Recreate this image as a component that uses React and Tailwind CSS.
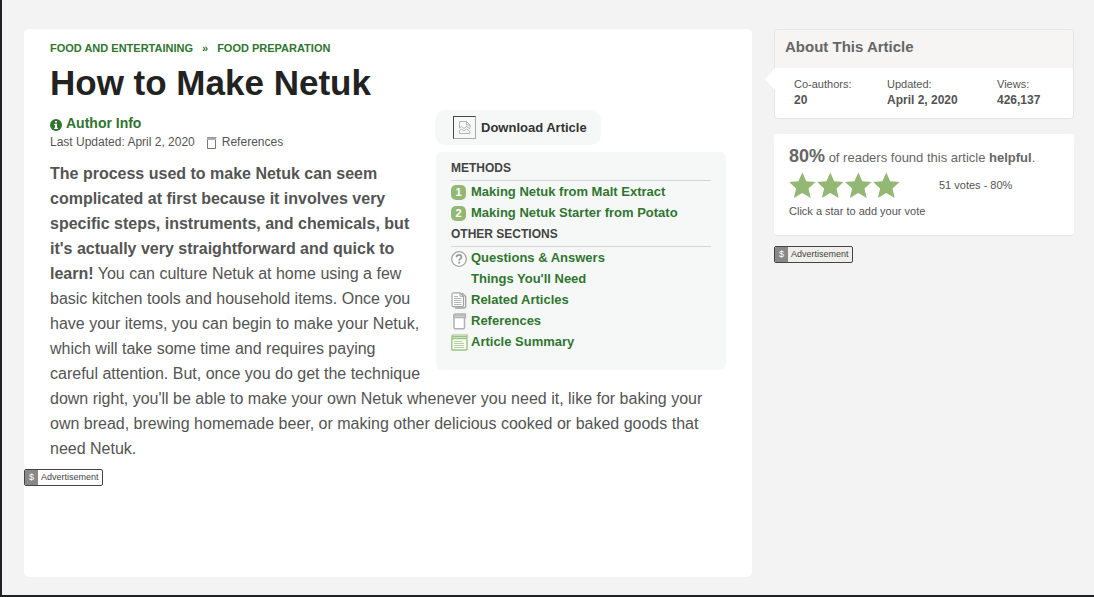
import React from "react";

function PageIcon({ className }) {
  return (
    <svg viewBox="0 0 12 14" className={className} fill="none" aria-hidden="true">
      <path d="M1.500 4v8.500h8V4" fill="#fff" stroke="#777" />
      <path d="M1 1h9v3H1z" fill="#aaa" />
      <path d="M1 1.500h9.500" stroke="#999" />
    </svg>
  );
}

function QuestionIcon() {
  return (
    <svg viewBox="0 0 16 16" className="size-4" fill="none" aria-hidden="true">
      <circle cx="8" cy="8" r="7.3" fill="#fff" stroke="#a3a3a3" strokeWidth="1.3" />
      <path d="M5.600 6.300c0-1.600 1-2.400 2.500-2.400s2.400.9 2.400 2.100c0 1.700-2.300 1.800-2.300 3.600" stroke="#999" strokeWidth="1.900" />
      <path d="M8.200 10.600v2" stroke="#999" strokeWidth="2" />
    </svg>
  );
}

function ArticlesIcon() {
  return (
    <svg viewBox="0 0 16 17" className="h-[17px] w-4" fill="none" stroke="#a3a3a3" aria-hidden="true">
      <path d="M11 1l3.700 3.500v9.500q0 2-2 2H4" strokeWidth="1.300" />
      <path d="M2.500.8H9l3.500 3.400v9q0 1.500-1.500 1.500H2.500Q1 14.700 1 13.200v-11Q1 .8 2.500.8z" fill="#fff" strokeWidth="1.200" />
      <path d="M9 1v3.300h3" />
      <path d="M3 4.500h4M3 6.500h7.500M3 8.500h7.500M3 10.500h7.500M3 12.500h7.500" stroke="#b5b5b5" />
    </svg>
  );
}

function ReferencesIcon() {
  return (
    <svg viewBox="0 0 16 17" className="h-[17px] w-4" fill="none" stroke="#b0b0b0" aria-hidden="true">
      <rect x="3" y="4" width="10.500" height="11.800" rx="1" fill="#fff" strokeWidth="1.500" />
      <path d="M2.700 5V2.500q0-1.500 1.500-1.500H14.500v3.500H3" fill="#e2e2e2" strokeWidth="1.300" />
      <path d="M3 2.700h11" />
    </svg>
  );
}

function SummaryIcon() {
  return (
    <svg viewBox="0 0 17 17" className="h-[17px] w-[17px] shrink-0" fill="none" stroke="#9cc283" aria-hidden="true">
      <rect x=".8" y="4.500" width="15.200" height="11.500" rx="1" fill="#f8fbf5" strokeWidth="1.400" />
      <path d="M.8 4.500V2.500q0-1.500 1.500-1.500H16v3.500M1 2.700h15" strokeWidth="1.200" />
      <path d="M3 7.500h8M3 9.500h10M3 11.500h10M3 13.500h10" stroke="#b3d29f" />
    </svg>
  );
}

function BrokenImage() {
  return (
    <span className="flex size-[23px] items-center justify-center border border-t-[#444] border-r-[#a9a9a9] border-b-[#a9a9a9] border-l-[#444]">
      <svg viewBox="0 0 14 15" className="h-[15px] w-3.5" fill="none" stroke="#b5b5b5" aria-hidden="true">
        <path d="M1.500 8V1.500h7l3.500 3.500v3.500M8.500 1.500V5H12" />
        <path d="M1.500 8l2-1.500 2.500 2 2.500-2 3.500 2.500M1.500 13.500v-3l2-1.500 2.500 2 2.500-2 3.500 2.500v2z" />
      </svg>
    </span>
  );
}

function Ad({ className }) {
  return (
    <div className={`flex h-[17px] w-fit items-stretch overflow-hidden rounded-xs border border-[#444] text-[9px] leading-[15px] text-[#444] ${className}`}>
      <span className="w-[13px] bg-[#888] text-center text-white">$</span>
      <span className="px-[3px]">Advertisement</span>
    </div>
  );
}

function Heading({ children }) {
  return (
    <h2 className="border-b border-[#d5d7d5] pb-px text-xs leading-[22px] font-bold text-[#444] uppercase">{children}</h2>
  );
}

function Entry({ icon, children }) {
  return (
    <li>
      <a href="#" className="flex h-[21px] items-center gap-1">
        <span className="flex w-4 shrink-0 pt-0.5">{icon}</span>
        <span>{children}</span>
      </a>
    </li>
  );
}

function NumberBadge({ children }) {
  return (
    <span className="size-[15px] rounded-[5px] bg-[#93b874] text-center text-[11px] leading-[15px] text-white">
      {children}
    </span>
  );
}

function Fact({ label, value }) {
  return (
    <div>
      <dt className="text-[11px] leading-4">{label}</dt>
      <dd className="text-xs leading-4 font-bold">{value}</dd>
    </div>
  );
}

function Star({ n }) {
  return (
    <button type="button" aria-label={`Rate ${n} stars`}>
      <svg viewBox="0 0 28 28" className="size-7" fill="#93b874" aria-hidden="true">
        <path d="M13.300.500l3.900 8.800 9.300.8-7 6.400 2.200 9.400-8.400-4.900-8.400 4.900 2.200-9.400-7-6.400 9.300-.8z" />
      </svg>
    </button>
  );
}

export default function App() {
  return (
    <div className="flex min-h-screen items-stretch gap-[22px] border-b-2 border-l-2 border-[#202124] bg-[#f3f3f3] pt-[29px] pr-5 pb-[18px] pl-[22px] font-['Liberation_Sans',Arial,sans-serif] text-[#545454]">
      <main className="min-w-0 flex-1 rounded-[5px] bg-white pt-2.5">
        <article className="px-[26px]">
          <nav aria-label="Breadcrumb" className="flex gap-[9px] text-[11px] leading-[18px] font-bold text-[#307530] uppercase">
            <a href="#">Food and Entertaining</a>
            <span>»</span>
            <a href="#">Food Preparation</a>
          </nav>
          <h1 className="pt-1.5 text-[35px] leading-10 font-bold text-[#222]">How to Make Netuk</h1>
          <aside className="float-right mt-[7px] ml-2 w-[291px]">
            <button type="button" className="flex h-[35px] items-center gap-[5px] rounded-[10px] bg-[#f6f8f7] pr-3.5 pl-[18px] text-[13px] font-bold text-[#333]">
              <BrokenImage />
              Download Article
            </button>
            <nav aria-label="Sections" className="mt-[7px] ml-px rounded-[6px] bg-[#f6f8f7] px-[15px] pt-[5px] pb-[18px] text-[13px] leading-[21px] font-bold text-[#307530]">
              <Heading>Methods</Heading>
              <ol>
                <Entry icon={<NumberBadge>1</NumberBadge>}>Making Netuk from Malt Extract</Entry>
                <Entry icon={<NumberBadge>2</NumberBadge>}>Making Netuk Starter from Potato</Entry>
              </ol>
              <Heading>Other Sections</Heading>
              <ul>
                <Entry icon={<QuestionIcon />}>Questions &amp; Answers</Entry>
                <Entry>Things You'll Need</Entry>
                <Entry icon={<ArticlesIcon />}>Related Articles</Entry>
                <Entry icon={<ReferencesIcon />}>References</Entry>
                <Entry icon={<SummaryIcon />}>Article Summary</Entry>
              </ul>
            </nav>
          </aside>
          <div className="pt-2.5">
            <a href="#" className="flex w-fit items-center gap-1 text-sm leading-5 font-bold text-[#307530]">
              <svg viewBox="0 0 12 12" className="mt-1 size-3" aria-hidden="true">
                <circle cx="6" cy="6" r="6" fill="#307530" />
                <path d="M5 2h2v1.600H5zM4.300 4.700H7v4h.9V10H4.200V8.700H5V6h-.7z" fill="#fff" />
              </svg>
              Author Info
            </a>
            <p className="flex items-center text-xs leading-[18px]">
              Last Updated: April 2, 2020
              <PageIcon className="mt-0.5 mr-1 ml-[11px] h-3.5 w-3" />
              <a href="#">References</a>
            </p>
          </div>
          <p className="pt-2.5 text-base leading-[25px]">
            <b>
              The process used to make Netuk can seem complicated at first because it involves very specific steps,
              instruments, and chemicals, but it's actually very straightforward and quick to learn!
            </b>{" "}
            You can culture Netuk at home using a few basic kitchen tools and household items. Once you have your items,
            you can begin to make your Netuk, which will take some time and requires paying careful attention. But, once
            you do get the technique down right, you'll be able to make your own Netuk whenever you need it, like for
            baking your own bread, brewing homemade beer, or making other delicious cooked or baked goods that need
            Netuk.
          </p>
        </article>
        <Ad className="mt-2 bg-white" />
      </main>
      <aside className="w-[300px] shrink-0">
        <section className="relative rounded-[4px] border border-[#e5e5e5] bg-white">
          <h2 className="rounded-t-[4px] bg-[#f6f5f4] px-2.5 pt-[5px] pb-[9px] text-[15px] leading-6 font-bold text-[#666]">
            About This Article
          </h2>
          <svg viewBox="0 0 10 22" className="absolute top-[38px] -left-2.5 h-[22px] w-2.5" fill="#fff" aria-hidden="true">
            <path d="M10 0v22L0 11z" />
          </svg>
          <dl className="grid grid-cols-[93px_110px_1fr] pt-2 pb-2.5 pl-[19px]">
            <Fact label="Co-authors:" value="20" />
            <Fact label="Updated:" value="April 2, 2020" />
            <Fact label="Views:" value="426,137" />
          </dl>
        </section>
        <section className="mt-[15px] rounded-[4px] border-b border-[#e5e5e5] bg-white px-[15px] pt-2.5 pb-4">
          <p className="text-[13px] leading-6 text-[#666]">
            <b className="text-lg leading-6">80%</b> of readers found this article <b>helpful</b>.
          </p>
          <div className="flex h-[31px] items-center text-[11px]">
            <div className="flex">
              <Star n={1} />
              <Star n={2} />
              <Star n={3} />
              <Star n={4} />
            </div>
            <span className="ml-[38px]">51 votes - 80%</span>
          </div>
          <p className="mt-0.5 text-[11px] leading-4">Click a star to add your vote</p>
        </section>
        <Ad className="mt-2.5 bg-[#f0eeea]" />
      </aside>
    </div>
  );
}
